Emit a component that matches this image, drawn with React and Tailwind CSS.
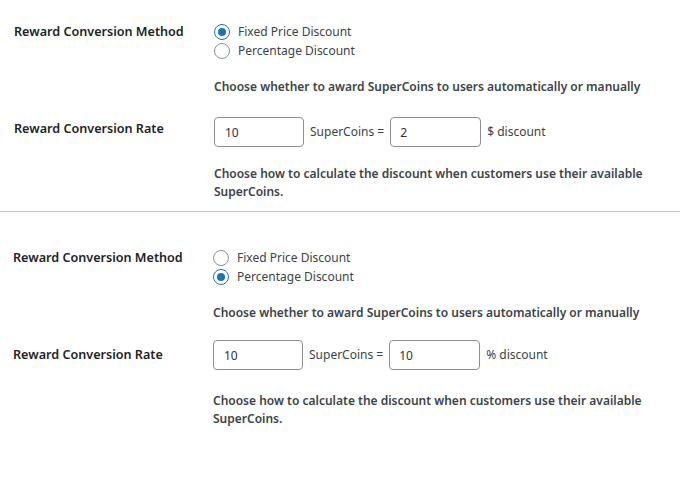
import React from "react";

const font = { fontFamily: '"Noto Sans", "Open Sans", sans-serif' };

function Radio({ checked, label }) {
  return (
    <label className="flex items-center h-[19px] text-[12px] text-[#3c434a]">
      <span
        className={
          "w-4 h-4 rounded-full border flex items-center justify-center mr-2 " +
          (checked ? "border-[#2271b1]" : "border-[#8c8f94]")
        }
      >
        {checked && <span className="w-2 h-2 rounded-full bg-[#2271b1]" />}
      </span>
      {label}
    </label>
  );
}

function Section({ percent, rateTop, labelTop, descTop }) {
  return (
    <div>
      <div className="flex pt-[22px]">
        <div className="w-[200px] font-semibold text-[12.6px] text-[#1d2327] leading-[19px]">
          Reward Conversion Method
        </div>
        <div className="flex flex-col">
          <Radio checked={!percent} label="Fixed Price Discount" />
          <Radio checked={percent} label="Percentage Discount" />
          <p className="mt-[17px] text-[12px] font-semibold text-[#3c434a] leading-[19px]">
            Choose whether to award SuperCoins to users automatically or manually
          </p>
        </div>
      </div>
      <div className={"flex " + rateTop}>
        <div className={"w-[200px] font-semibold text-[12.6px] text-[#1d2327] leading-[19px] " + labelTop}>
          Reward Conversion Rate
        </div>
        <div className="flex flex-col">
          <div className="flex items-center text-[12px] text-[#3c434a]">
            <input
              readOnly
              value="10"
              className="w-[90px] h-[30px] border border-[#8c8f94] rounded px-[10px] text-[12px] text-[#2c3338]"
            />
            <span className="mx-[6px]">SuperCoins =</span>
            <input
              readOnly
              value={percent ? "10" : "2"}
              className="w-[91px] h-[30px] border border-[#8c8f94] rounded px-[9px] text-[12px] text-[#2c3338]"
            />
            <span className="ml-[6px]">{percent ? "% discount" : "$ discount"}</span>
          </div>
          <p className={"w-[440px] text-[12px] font-semibold text-[#3c434a] leading-[18px] " + descTop}>
            Choose how to calculate the discount when customers use their available SuperCoins.
          </p>
        </div>
      </div>
    </div>
  );
}

export default function App() {
  return (
    <div className="w-[680px] h-[497px] bg-white" style={font}>
      <div className="pl-[14px] pb-[10px]">
        <Section percent={false} rateTop="pt-[21px]" labelTop="pt-[2px]" descTop="mt-[18px]" />
      </div>
      <div className="border-t border-[#c3c4c7]" />
      <div className="pl-[13px] pt-[14px]">
        <Section percent={true} rateTop="pt-[18px]" labelTop="pt-[5px]" descTop="mt-[22px]" />
      </div>
    </div>
  );
}
